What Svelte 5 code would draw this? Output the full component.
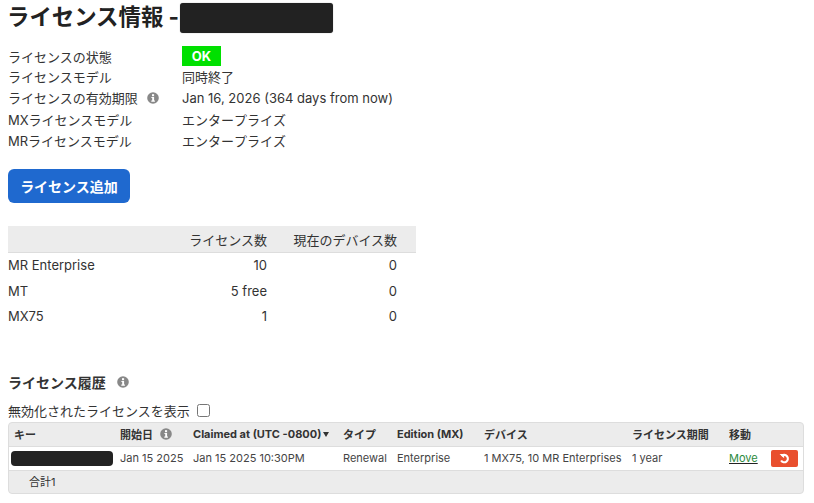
<script>
  const info = [
    { k: 'ライセンスモデル', v: '同時終了', size: 'short' },
    { k: 'ライセンスの有効期限', v: 'Jan 16, 2026 (364 days from now)', icon: true, size: 'tall' },
    { k: 'MXライセンスモデル', v: 'エンタープライズ', size: 'mid' },
    { k: 'MRライセンスモデル', v: 'エンタープライズ', size: 'mid' }
  ];
  const counts = [
    ['MR Enterprise', '10', '0'],
    ['MT', '5 free', '0'],
    ['MX75', '1', '0']
  ];
</script>

{#snippet infoIcon()}
  <svg class="info" viewBox="0 0 12 12" width="12" height="12" aria-hidden="true">
    <circle cx="6" cy="6" r="5.8" fill="#888" />
    <rect x="5" y="2.2" width="2.1" height="2" fill="#fff" />
    <path d="M4.4 5h2.7v3.6h.8v1.1H4.3V8.6h.9V6.1h-.8z" fill="#fff" />
  </svg>
{/snippet}

<div class="page">
  <div class="title">
    <h1>ライセンス情報 -</h1>
    <span class="redact title-redact"></span>
  </div>

  <div class="info-grid">
    <div class="row first"><span class="k">ライセンスの状態</span><span class="ok">OK</span></div>
    {#each info as r}
      <div class="row {r.size}">
        <span class="k">{r.k}{#if r.icon}{@render infoIcon()}{/if}</span>
        <span class="v">{r.v}</span>
      </div>
    {/each}
  </div>

  <button class="add">ライセンス追加</button>

  <table class="counts">
    <thead>
      <tr><th></th><th>ライセンス数</th><th>現在のデバイス数</th></tr>
    </thead>
    <tbody>
      {#each counts as c}
        <tr><td>{c[0]}</td><td class="num">{c[1]}</td><td class="num">{c[2]}</td></tr>
      {/each}
    </tbody>
  </table>

  <h2>ライセンス履歴{@render infoIcon()}</h2>
  <label class="check">無効化されたライセンスを表示<input type="checkbox" /></label>

  <div class="history">
    <div class="h-grid head">
      <span>キー</span>
      <span class="nowrap">開始日{@render infoIcon()}</span>
      <span class="nowrap">Claimed at (UTC -0800)<i class="caret"></i></span>
      <span>タイプ</span>
      <span>Edition (MX)</span>
      <span>デバイス</span>
      <span>ライセンス期間</span>
      <span>移動</span>
      <span></span>
    </div>
    <div class="h-grid body">
      <span class="redact key-redact"></span>
      <span>Jan 15 2025</span>
      <span>Jan 15 2025 10:30PM</span>
      <span>Renewal</span>
      <span>Enterprise</span>
      <span>1 MX75, 10 MR Enterprises</span>
      <span>1 year</span>
      <span><a href="#move">Move</a></span>
      <span>
        <button class="undo" aria-label="undo">
          <svg viewBox="0 0 12 12" width="11" height="11" aria-hidden="true">
            <path d="M2.9 3.2A4 4 0 1 1 2.3 8.2" fill="none" stroke="#fff" stroke-width="2.3" />
            <path d="M.6 1h5v4.8z" fill="#fff" />
          </svg>
        </button>
      </span>
    </div>
    <div class="foot">合計1</div>
  </div>
</div>

<style>
  :global(body) {
    margin: 0;
    background: #fff;
  }
  .page {
    font-family: Inter, "Noto Sans CJK JP", sans-serif;
    font-size: 13px;
    color: #333;
    padding: 3px 8px 0;
    box-sizing: border-box;
    width: 814px;
    height: 503px;
    overflow: hidden;
  }
  .title {
    display: flex;
    align-items: center;
    height: 30px;
  }
  h1 {
    margin: 0 0 2px -1px;
    font-size: 22.4px;
    font-weight: 700;
    color: #222;
    line-height: 28px;
    white-space: nowrap;
  }
  .redact {
    display: block;
    background: #222;
  }
  .title-redact {
    width: 153px;
    height: 30px;
    border-radius: 3px;
    margin-left: 1px;
    box-shadow: 0 0 1px #888;
  }
  .info-grid {
    margin-top: 13px;
    display: flex;
    flex-direction: column;
  }
  .row {
    display: flex;
    align-items: center;
    white-space: nowrap;
  }
  .row.first,
  .row.short {
    height: 20px;
  }
  .row.tall {
    height: 23px;
  }
  .row.mid {
    height: 21px;
  }
  .row.mid .v {
    font-kerning: none;
  }
  .k {
    width: 174px;
    flex: none;
    display: flex;
    align-items: center;
  }
  .info {
    margin-left: 9px;
    flex: none;
  }
  .ok {
    width: 39px;
    height: 20px;
    background: #00e000;
    color: #fff;
    font-weight: 700;
    text-align: center;
    line-height: 20px;
  }
  .add {
    display: block;
    margin-top: 18px;
    width: 122px;
    height: 34px;
    background: #1f69cf;
    color: #fff;
    border: 0;
    border-radius: 6px;
    font: 700 14px Inter, "Noto Sans CJK JP", sans-serif;
    padding: 0;
  }
  .counts {
    margin-top: 23px;
    border-collapse: collapse;
    width: 408px;
    table-layout: fixed;
  }
  .counts th {
    background: #ececec;
    height: 26px;
    padding: 0;
    font-weight: 400;
    text-align: right;
    border-bottom: 1px solid #ddd;
    color: #333;
  }
  .counts th:nth-child(1) { width: 160px; }
  .counts th:nth-child(2) { width: 99px; }
  .counts th:nth-child(3),
  .counts td:nth-child(3) { padding-right: 19px; }
  .counts td {
    height: 25px;
    padding: 0 0 1px;
    box-sizing: border-box;
  }
  .counts tr:nth-child(2) td {
    height: 26px;
    padding-bottom: 0;
  }
  .counts td:nth-child(3) {
    padding-right: 19px;
  }
  .num {
    text-align: right;
  }
  h2 {
    margin: 43px 0 0;
    font-size: 14px;
    font-weight: 700;
    color: #333;
    height: 20px;
    display: flex;
    align-items: center;
  }
  h2 .info {
    margin-left: 11px;
  }
  .check {
    display: flex;
    align-items: center;
    height: 20px;
    margin-top: 9px;
  }
  .check input {
    margin: 0 0 0 7px;
    width: 13px;
    height: 13px;
  }
  .history {
    margin-top: 1px;
    width: 796px;
    box-sizing: border-box;
    border: 1px solid #ddd;
    border-radius: 4px;
    background: #ececec;
    font-size: 11px;
    overflow: hidden;
  }
  .h-grid {
    display: grid;
    align-items: center;
  }
  .h-grid > span {
    white-space: nowrap;
  }
  .head {
    height: 23px;
    font-weight: 700;
    padding-left: 5px;
    border-bottom: 1px solid #ddd;
    grid-template-columns: 106px 73px 150px 54px 87px 148px 97px 42px 33px;
    color: #333;
  }
  .head .info {
    margin-left: 7px;
  }
  .nowrap {
    display: flex;
    align-items: center;
  }
  .caret {
    width: 0;
    height: 0;
    margin-left: 2px;
    border-left: 3px solid transparent;
    border-right: 3px solid transparent;
    border-top: 5px solid #333;
  }
  .body {
    height: 23px;
    background: #fff;
    padding-left: 2px;
    border-bottom: 1px solid #ddd;
    grid-template-columns: 109px 73px 150px 54px 87px 148px 97px 42px 33px;
    color: #444;
  }
  .key-redact {
    width: 102px;
    height: 15px;
    border-radius: 4px;
  }
  .body a {
    color: #2a8a3c;
    text-decoration-color: #222;
  }
  .undo {
    display: flex;
    align-items: center;
    justify-content: center;
    width: 27px;
    height: 17px;
    padding: 0;
    border: 0;
    border-radius: 2px;
    background: #e94f2e;
  }
  .foot {
    height: 22px;
    line-height: 22px;
    padding-left: 20px;
  }
</style>
